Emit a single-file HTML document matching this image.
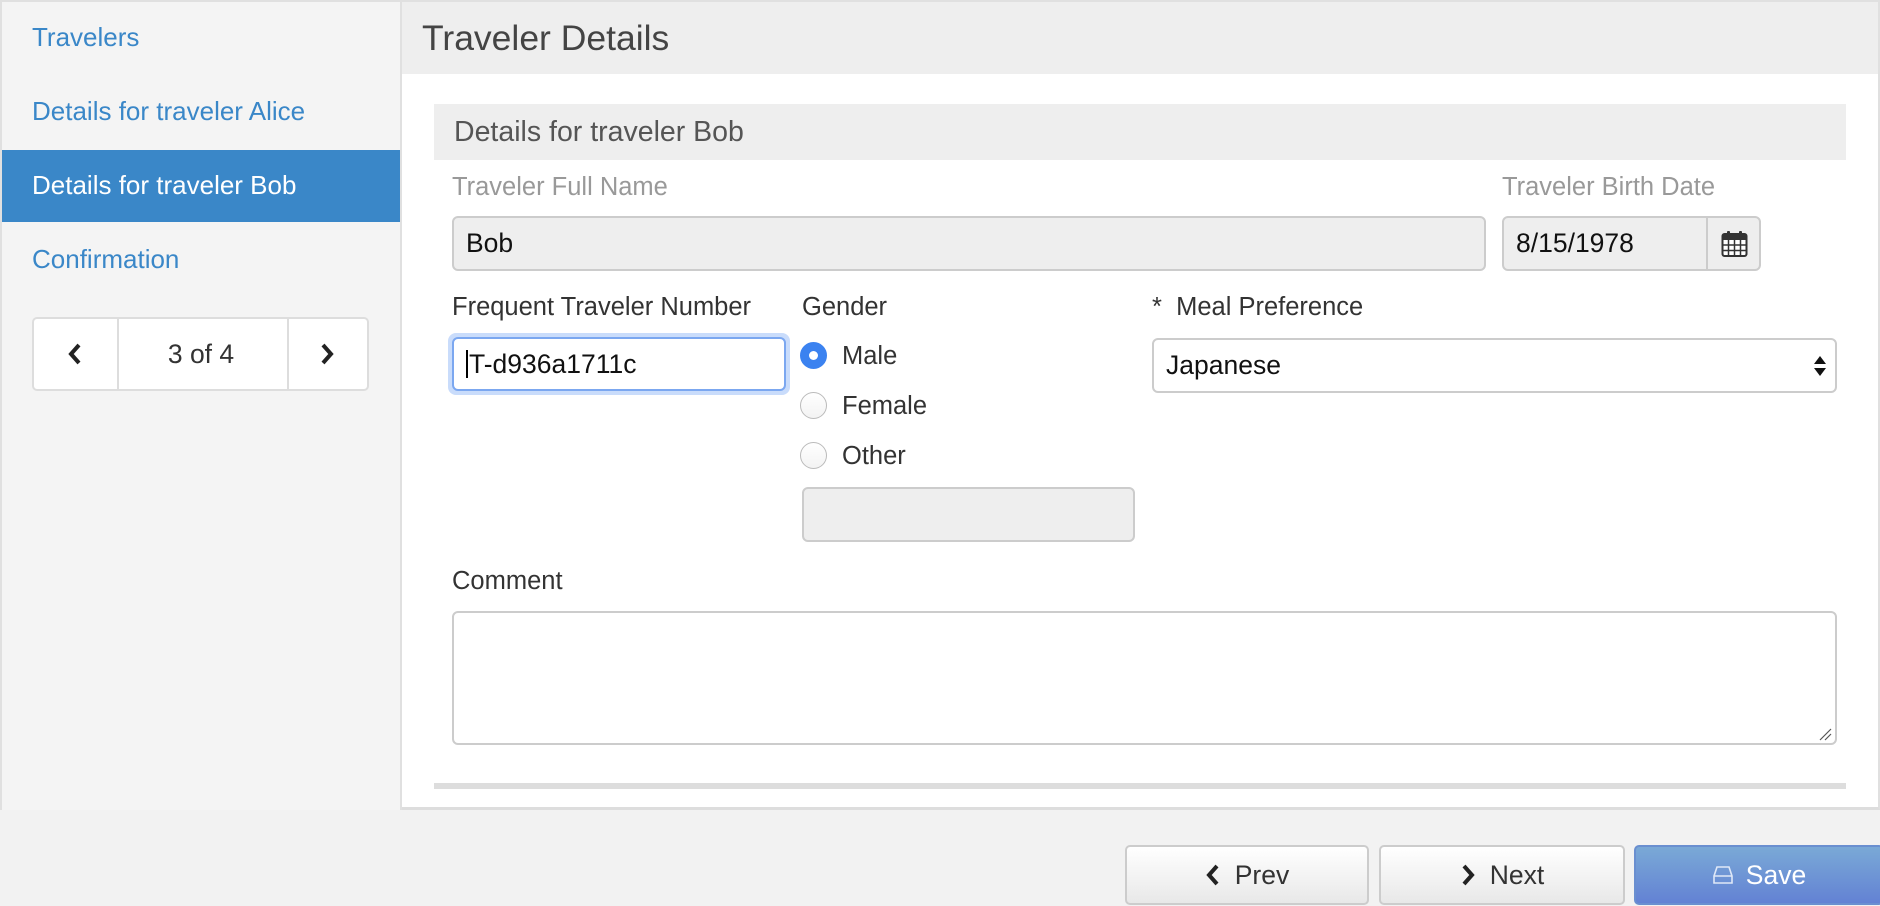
<!DOCTYPE html>
<html><head><meta charset="utf-8"><style>
*{box-sizing:border-box;margin:0;padding:0}
body{width:1880px;height:906px;overflow:hidden;background:#f2f2f2;font-family:"Liberation Sans",Arial,sans-serif;position:relative;color:#333}
.a{position:absolute}
.side{left:0;top:0;width:402px;height:810px;background:#f4f4f4;border-top:2px solid #e0e0e0;border-left:2px solid #e0e0e0;border-right:2px solid #e0e0e0}
.nav{left:32px;font-size:26px;color:#3a87c8;line-height:30px}
.active{left:2px;top:150px;width:398px;height:72px;background:#3a87c8}
.pager{left:32px;top:317px;width:337px;height:74px;background:#fff;border:2px solid #ddd;border-radius:5px}
.main{left:402px;top:0;width:1478px;height:810px;background:#fff;border-top:2px solid #e0e0e0;border-right:2px solid #e0e0e0;border-bottom:3px solid #ddd}
.hdr{left:402px;top:2px;width:1476px;height:72px;background:#eee}
.lbl{font-size:25.5px;line-height:28px}
.inp{border:2px solid #ccc;border-radius:6px;background:#eee;font-size:26.5px;padding-left:12px;display:flex;align-items:center;color:#111}
.radio{width:27px;height:27px;border-radius:50%;border:1.5px solid #bbb;background:linear-gradient(#fff,#f3f3f3)}
.rt{font-size:25.5px;line-height:28px}
.btn{top:845px;height:60px;border:2px solid #ccc;border-radius:5px;background:linear-gradient(#fff,#e8e8e8);font-size:26.5px;display:flex;align-items:center;justify-content:center;color:#333}
</style></head><body>
<div class="a side"></div>
<div class="a active"></div>
<div class="a nav" style="top:22px">Travelers</div>
<div class="a nav" style="top:96px">Details for traveler Alice</div>
<div class="a nav" style="top:170px;color:#fff">Details for traveler Bob</div>
<div class="a nav" style="top:244px">Confirmation</div>
<div class="a pager">
 <div class="a" style="left:83px;top:0;width:2px;height:70px;background:#ddd"></div>
 <div class="a" style="left:253px;top:0;width:2px;height:70px;background:#ddd"></div>
 <svg class="a" style="left:34px;top:24px" width="14" height="22" viewBox="0 0 14 22"><path d="M11 2 L3 11 L11 20" fill="none" stroke="#222" stroke-width="4"/></svg>
 <div class="a" style="left:83px;width:168px;top:0;height:70px;line-height:70px;text-align:center;font-size:26.5px">3 of 4</div>
 <svg class="a" style="left:286px;top:24px" width="14" height="22" viewBox="0 0 14 22"><path d="M3 2 L11 11 L3 20" fill="none" stroke="#222" stroke-width="4"/></svg>
</div>
<div class="a main"></div>
<div class="a hdr"></div>
<div class="a" style="left:422px;top:18px;font-size:35.5px;color:#444;line-height:40px">Traveler Details</div>
<div class="a" style="left:434px;top:104px;width:1412px;height:56px;background:#eee"></div>
<div class="a" style="left:454px;top:116px;font-size:28.5px;color:#555;line-height:32px">Details for traveler Bob</div>
<div class="a lbl" style="left:452px;top:173px;color:#999">Traveler Full Name</div>
<div class="a inp" style="left:452px;top:216px;width:1034px;height:55px">Bob</div>
<div class="a lbl" style="left:1502px;top:173px;color:#999">Traveler Birth Date</div>
<div class="a inp" style="left:1502px;top:216px;width:259px;height:55px">8/15/1978</div>
<div class="a" style="left:1706px;top:218px;width:2px;height:51px;background:#ccc"></div>
<svg class="a" style="left:1721px;top:230px" width="27" height="28" viewBox="0 0 27 28"><rect x="1.5" y="4" width="24" height="22" rx="2" fill="#fff" stroke="#333" stroke-width="2"/><rect x="1.5" y="4" width="24" height="6" fill="#333"/><path d="M7.5 10v16M13.5 10v16M19.5 10v16M2 15h24M2 20.5h24" stroke="#333" stroke-width="1.5"/><rect x="6" y="1" width="3" height="6" rx="1" fill="#333"/><rect x="18" y="1" width="3" height="6" rx="1" fill="#333"/></svg>
<div class="a lbl" style="left:452px;top:293px">Frequent Traveler Number</div>
<div class="a" style="left:448px;top:333px;width:342px;height:62px;border-radius:8px;background:#c9dcfb"></div>
<div class="a inp" style="left:452px;top:337px;width:334px;height:54px;background:#fff;border-color:#7ba7f0">
<span style="border-left:2px solid #000;height:28px;margin-right:1px"></span>T-d936a1711c</div>
<div class="a lbl" style="left:802px;top:293px">Gender</div>
<div class="a radio" style="left:800px;top:342px;background:#3b82f0;border-color:#3b82f0"></div>
<div class="a" style="left:809px;top:351px;width:9px;height:9px;border-radius:50%;background:#fff"></div>
<div class="a rt" style="left:842px;top:342px">Male</div>
<div class="a radio" style="left:800px;top:392px"></div>
<div class="a rt" style="left:842px;top:392px">Female</div>
<div class="a radio" style="left:800px;top:442px"></div>
<div class="a rt" style="left:842px;top:442px">Other</div>
<div class="a inp" style="left:802px;top:487px;width:333px;height:55px"></div>
<div class="a lbl" style="left:1152px;top:293px">*&nbsp; Meal Preference</div>
<div class="a inp" style="left:1152px;top:338px;width:685px;height:55px;background:#fff">Japanese</div>
<svg class="a" style="left:1813px;top:355px" width="14" height="22" viewBox="0 0 14 22"><path d="M7 1L13 9H1Z M7 21L13 13H1Z" fill="#111"/></svg>
<div class="a lbl" style="left:452px;top:567px">Comment</div>
<div class="a" style="left:452px;top:611px;width:1385px;height:134px;border:2px solid #ccc;border-radius:6px;background:#fff"></div>
<svg class="a" style="left:1818px;top:727px" width="14" height="14" viewBox="0 0 14 14"><path d="M13 2L2 13M13 7L7 13" stroke="#555" stroke-width="1.2"/></svg>
<div class="a" style="left:434px;top:783px;width:1412px;height:6px;background:#ddd"></div>
<div class="a btn" style="left:1125px;width:244px"><svg width="16" height="22" viewBox="0 0 14 22" style="margin-right:14px"><path d="M11 2L3 11L11 20" fill="none" stroke="#222" stroke-width="4"/></svg>Prev</div>
<div class="a btn" style="left:1379px;width:246px"><svg width="16" height="22" viewBox="0 0 14 22" style="margin-right:14px"><path d="M3 2L11 11L3 20" fill="none" stroke="#222" stroke-width="4"/></svg>Next</div>
<div class="a btn" style="left:1634px;width:250px;background:linear-gradient(#7aa9d6,#6382d4);border-color:#6a8fd0;color:#fff"><svg width="22" height="22" viewBox="0 0 22 22" style="margin-right:12px"><path d="M5 3h12l3 9v7H2v-7z" fill="none" stroke="#dfe8f7" stroke-width="1.6"/><path d="M2 12h18" stroke="#dfe8f7" stroke-width="1.6"/></svg>Save</div>
</body></html>
